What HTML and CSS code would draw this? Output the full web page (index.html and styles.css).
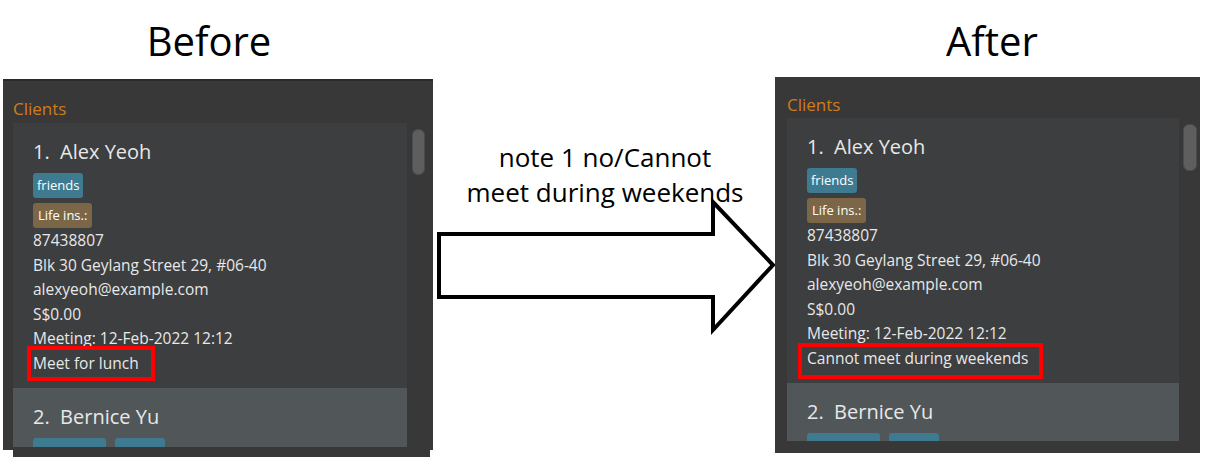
FILE: index.html
```html
<!DOCTYPE html>
<html lang="en">
<head>
<meta charset="utf-8">
<title>Before / After</title>
<link rel="stylesheet" href="styles.css">
</head>
<body>
<div class="page">
  <section class="col col-before">
    <h1 class="title title-before">Before</h1>
    <div class="panel panel-before">
      <div class="panel-label">Clients</div>
      <div class="panel-body">
        <div class="list">
          <div class="cell">
            <div class="name">1.  Alex Yeoh</div>
            <div class="tags"><span class="tag tag-blue">friends</span></div>
            <div class="tags"><span class="tag tag-brown">Life ins.:</span></div>
            <div class="line">87438807</div>
            <div class="line">Blk 30 Geylang Street 29, #06-40</div>
            <div class="line">alexyeoh@example.com</div>
            <div class="line">S$0.00</div>
            <div class="line">Meeting: 12-Feb-2022 12:12</div>
            <div class="line"><span class="note note-before">Meet for lunch</span></div>
          </div>
          <div class="cell cell-even">
            <div class="name">2.  Bernice Yu</div>
            <div class="tags"><span class="tag tag-blue tag-long"></span><span class="tag tag-blue tag-short"></span></div>
          </div>
        </div>
        <div class="scroll"><div class="thumb"></div></div>
      </div>
    </div>
    <div class="panel-tail"></div>
  </section>

  <section class="col col-middle">
    <p class="caption">note 1 no/Cannot<br>meet during weekends</p>
    <svg class="arrow" width="340" height="134" viewBox="0 0 340 134">
      <polygon points="2,34 276,34 276,2 336,65 276,130 276,97 2,97" fill="#ffffff" stroke="#000000" stroke-width="4"/>
    </svg>
  </section>

  <section class="col col-after">
    <h1 class="title title-after">After</h1>
    <div class="panel panel-after">
      <div class="panel-label">Clients</div>
      <div class="panel-body">
        <div class="list">
          <div class="cell">
            <div class="name">1.  Alex Yeoh</div>
            <div class="tags"><span class="tag tag-blue">friends</span></div>
            <div class="tags"><span class="tag tag-brown">Life ins.:</span></div>
            <div class="line">87438807</div>
            <div class="line">Blk 30 Geylang Street 29, #06-40</div>
            <div class="line">alexyeoh@example.com</div>
            <div class="line">S$0.00</div>
            <div class="line">Meeting: 12-Feb-2022 12:12</div>
            <div class="line"><span class="note note-after">Cannot meet during weekends</span></div>
          </div>
          <div class="cell cell-even">
            <div class="name">2.  Bernice Yu</div>
            <div class="tags"><span class="tag tag-blue tag-long"></span><span class="tag tag-blue tag-short"></span></div>
          </div>
        </div>
        <div class="scroll"><div class="thumb"></div></div>
      </div>
    </div>
  </section>
</div>
</body>
</html>
```
FILE: styles.css
```css
html, body {
  margin: 0;
  padding: 0;
  background: #ffffff;
}
body {
  width: 1205px;
  height: 462px;
  overflow: hidden;
  font-family: "Open Sans", "Noto Sans", sans-serif;
}
.page {
  display: flex;
  padding-left: 3px;
}
.col-before { width: 430px; }
.col-middle { width: 342px; padding-top: 140px; box-sizing: border-box; }
.col-after { width: 425px; }

.title {
  margin: 0;
  font-weight: 400;
  font-size: 40px;
  line-height: 44px;
  text-align: center;
  color: #000000;
  box-sizing: border-box;
  padding-top: 19px;
}
.title-before { height: 79px; padding-right: 18px; }
.title-after { height: 77px; padding-left: 9px; }

.panel {
  background: #383838;
  box-sizing: border-box;
}
.panel-before {
  height: 371px;
  border-top: 2px solid #2b2b2b;
  padding: 17px 0 0 10px;
}
.panel-after {
  height: 376px;
  padding: 17px 0 0 12px;
}
.panel-tail {
  height: 7px;
  margin-left: 10px;
  width: 417px;
  background: #383838;
}
.panel-label {
  color: #cf7d1a;
  font-size: 17px;
  line-height: 22px;
}
.panel-body {
  display: flex;
  margin-top: 3px;
}
.panel-after .panel-body { margin-top: 2px; }

.list {
  width: 394px;
  height: 324px;
  overflow: hidden;
  background: #3c3e3f;
}
.panel-after .list { width: 392px; height: 323px; }

.scroll {
  margin-left: 5px;
  width: 13px;
  padding-top: 6px;
}
.panel-after .scroll { margin-left: 4px; width: 14px; }
.thumb {
  height: 46px;
  border-radius: 6px;
  background: #5e5e5e;
  border: 1px solid #4b4b4b;
  box-sizing: border-box;
}
.panel-after .thumb { height: 47px; }

.cell {
  padding: 15px 0 13px 20px;
  color: #e8e8e8;
}
.cell-even { background: #515658; }
.name {
  font-size: 20px;
  line-height: 28px;
  margin-bottom: 7px;
  white-space: pre;
}
.tags {
  display: flex;
  gap: 9px;
}
.tags + .tags { margin-top: 5px; }
.tag {
  font-size: 13px;
  line-height: 25px;
  height: 25px;
  padding: 0 4px;
  border-radius: 3px;
  color: #ffffff;
  box-sizing: border-box;
}
.tag-blue { background: #3e7b91; }
.tag-brown { background: #7b6647; padding: 0 5px; }
.tag-long { width: 73px; }
.tag-short { width: 50px; }
.line {
  font-size: 15.5px;
  line-height: 24.5px;
  white-space: nowrap;
}
.note {
  display: inline-block;
  vertical-align: top;
  position: relative;
}
.note::after {
  content: "";
  position: absolute;
  border: 4px solid #ff0000;
}
.note-before::after { left: -6px; right: -16px; top: -5px; bottom: -6px; }
.note-after::after { left: -9px; right: -15px; top: -3px; bottom: -9px; }

.caption {
  margin: 0;
  font-size: 26px;
  line-height: 35px;
  text-align: center;
  color: #000000;
  padding-left: 2px;
}
.arrow {
  display: block;
  margin: -10px 0 0 4px;
  overflow: visible;
}
```
